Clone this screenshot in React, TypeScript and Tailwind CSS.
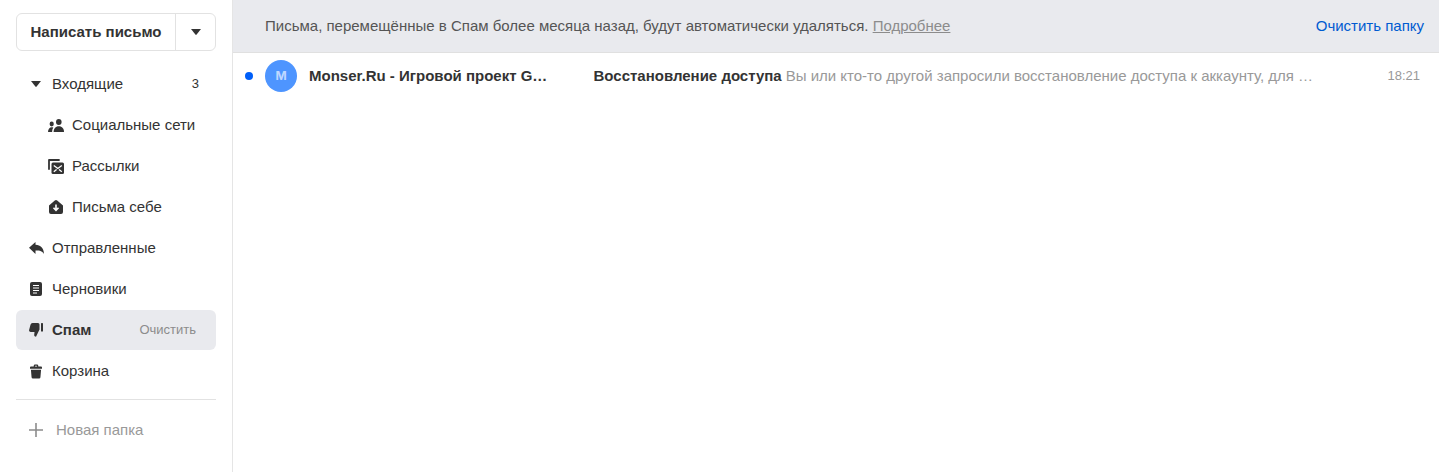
const fontStack = "font-['Liberation_Sans',Arial,sans-serif]";

function Caret() {
  return (
    <svg width="10" height="6" viewBox="0 0 10 6" className="text-[#333]">
      <path d="M0 0h10L5.600 5.600a.8.8 0 0 1-1.200 0z" fill="currentColor" />
    </svg>
  );
}

function PeopleIcon() {
  return (
    <svg width="16" height="13" viewBox="0 0 16 13" fill="#333">
      <ellipse cx="10.800" cy="3" rx="2.800" ry="3" />
      <path d="M5.600 13c0-3.300 1.800-5.800 5.200-5.800S16 9.700 16 13z" />
      <ellipse cx="3.700" cy="5" rx="2.100" ry="2.400" />
      <path d="M0 13c0-2.700 1.400-4.800 3.800-4.800.6 0 1.100.1 1.500.3C4.500 9.800 4.100 11.300 4.100 13z" />
    </svg>
  );
}

function MailingIcon() {
  return (
    <svg width="16" height="15" viewBox="0 0 16 15">
      <path d="M1 1h10M1 1v9" stroke="#333" strokeWidth="1.800" fill="none" strokeLinecap="round" />
      <rect x="3.500" y="3.500" width="12.500" height="11.500" rx="1.500" fill="#333" />
      <path d="M5.800 6.500l4 3 4-3M5.800 12.700l2.800-2.300M13.800 12.700 11 10.400" stroke="#fff" strokeWidth="1.300" fill="none" />
    </svg>
  );
}

function SelfIcon() {
  return (
    <svg width="14" height="14" viewBox="0 0 14 14">
      <path d="M0 5.500 5.800.6a1.800 1.800 0 0 1 2.400 0L14 5.500V12a2 2 0 0 1-2 2H2a2 2 0 0 1-2-2z" fill="#333" />
      <path d="M7 4.500v5.500M4.500 7.800 7 10.300l2.500-2.500" stroke="#fff" strokeWidth="1.600" fill="none" />
    </svg>
  );
}

function SentIcon() {
  return (
    <svg width="15" height="12" viewBox="0 0 15 12" fill="#333">
      <path d="M6.500 0v2.800c5.200 .2 8.200 3.200 8.500 9.200-.9-1.600-1.800-2.400-3-2.800-1.400-.5-3-.6-5.500-.6V12L0 5.800z" />
    </svg>
  );
}

function DraftIcon() {
  return (
    <svg width="12" height="14" viewBox="0 0 12 14">
      <rect width="12" height="14" rx="2" fill="#333" />
      <path d="M3 3.500h6M3 6h6M3 8.500h6M3 11h4" stroke="#fff" strokeWidth="1" />
    </svg>
  );
}

function SpamIcon() {
  return (
    <svg width="14" height="14" viewBox="0 0 14 14" fill="#333">
      <path d="M3.500 0H9a1.500 1.500 0 0 1 1.500 1.500v5L7 13.800c-1.100 0-1.900-.8-1.800-1.900L5.500 9H1.800A1.700 1.700 0 0 1 .1 7L1.500 1.700A2.300 2.300 0 0 1 3.500 0z" />
      <rect x="12" y="0" width="2" height="8.500" rx=".6" />
    </svg>
  );
}

function TrashIcon() {
  return (
    <svg width="12" height="15" viewBox="0 0 13 15" fill="#333">
      <path d="M4 2.200V1.500A1.500 1.500 0 0 1 5.500 0h2A1.500 1.500 0 0 1 9 1.500v.7h3a1 1 0 0 1 1 1V4.500H0V3.200a1 1 0 0 1 1-1zm1.300 0h2.400v-.6a.4.400 0 0 0-.4-.4H5.700a.4.400 0 0 0-.4.400z" />
      <path d="M1 5.500h11l-.7 8.100A1.500 1.500 0 0 1 9.800 15H3.200a1.500 1.500 0 0 1-1.500-1.400z" />
    </svg>
  );
}

function NavRow({
  icon,
  label,
  right,
  active,
  nested,
}: {
  icon: React.ReactNode;
  label: string;
  right?: React.ReactNode;
  active?: boolean;
  nested?: boolean;
}) {
  return (
    <div
      className={`flex h-10 items-center rounded-md pr-5 text-[15px] text-[#333] ${
        active ? "bg-[#e9eaee] font-bold" : ""
      } ${nested ? "pl-8" : "pl-3"}`}
    >
      <span className="flex w-4 items-center justify-center">{icon}</span>
      <span className="ml-2 flex-1 whitespace-nowrap">{label}</span>
      {right}
    </div>
  );
}

export default function App() {
  return (
    <div className={`${fontStack} flex h-[472px] w-[1439px] overflow-hidden bg-white`}>
      <aside className="w-[233px] shrink-0 border-r border-[#e5e5e5] px-4 pt-[13px]">
        <div className="flex h-[38px] w-[200px] items-center rounded-md border border-[#e2e2e2] text-[15px] font-bold text-[#333]">
          <span className="w-[159px] border-r border-[#e2e2e2] text-center leading-[36px]">
            Написать письмо
          </span>
          <span className="flex flex-1 items-center justify-center">
            <Caret />
          </span>
        </div>
        <nav className="mt-[13px] flex flex-col gap-px">
          <NavRow icon={<Caret />} label="Входящие" right={<span className="mr-[-3px] text-[13px]">3</span>} />
          <NavRow nested icon={<PeopleIcon />} label="Социальные сети" />
          <NavRow nested icon={<MailingIcon />} label="Рассылки" />
          <NavRow nested icon={<SelfIcon />} label="Письма себе" />
          <NavRow icon={<SentIcon />} label="Отправленные" />
          <NavRow icon={<DraftIcon />} label="Черновики" />
          <NavRow
            active
            icon={<SpamIcon />}
            label="Спам"
            right={<span className="text-[13px] font-normal text-[#8c8c8c]">Очистить</span>}
          />
          <NavRow icon={<TrashIcon />} label="Корзина" />
        </nav>
        <div className="mt-2 border-t border-[#e2e2e2]" />
        <div className="flex h-[60px] items-center pl-3 text-[15px] text-[#999]">
          <svg width="16" height="16" viewBox="0 0 16 16" className="mr-3">
            <path d="M8 1v14M1 8h14" stroke="#8c8c8c" strokeWidth="1.600" />
          </svg>
          Новая папка
        </div>
      </aside>

      <main className="min-w-0 flex-1">
        <div className="flex h-[53px] items-center justify-between border-b border-[#e0e0e0] bg-[#e9eaee] pl-8 pr-[15px] text-[15px]">
          <p className="text-[#555]">
            Письма, перемещённые в Спам более месяца назад, будут автоматически удаляться.{" "}
            <span className="text-[#8c8c8c] underline">Подробнее</span>
          </p>
          <span className="text-[#005bd1]">Очистить папку</span>
        </div>
        <div className="flex h-[46px] items-center pl-3 pr-[19px] text-[15px]">
          <span className="h-2 w-2 shrink-0 rounded-full bg-[#005ff9]" />
          <span className="ml-3 flex h-8 w-8 shrink-0 items-center justify-center rounded-full bg-[#4e95ff] font-['Inter',sans-serif] text-[12px] font-bold text-[#c0d8ff]">
            M
          </span>
          <span className="ml-3 w-[240px] shrink-0 whitespace-nowrap font-bold text-[#333]">
            Monser.Ru - Игровой проект G…
          </span>
          <span className="ml-[44.500px] shrink-0 font-bold text-[#333]">Восстановление доступа</span>
          <span className="ml-1 whitespace-nowrap text-[#999]">
            Вы или кто-то другой запросили восстановление доступа к аккаунту, для …
          </span>
          <span className="ml-auto text-[13px] text-[#999]">18:21</span>
        </div>
      </main>
    </div>
  );
}
